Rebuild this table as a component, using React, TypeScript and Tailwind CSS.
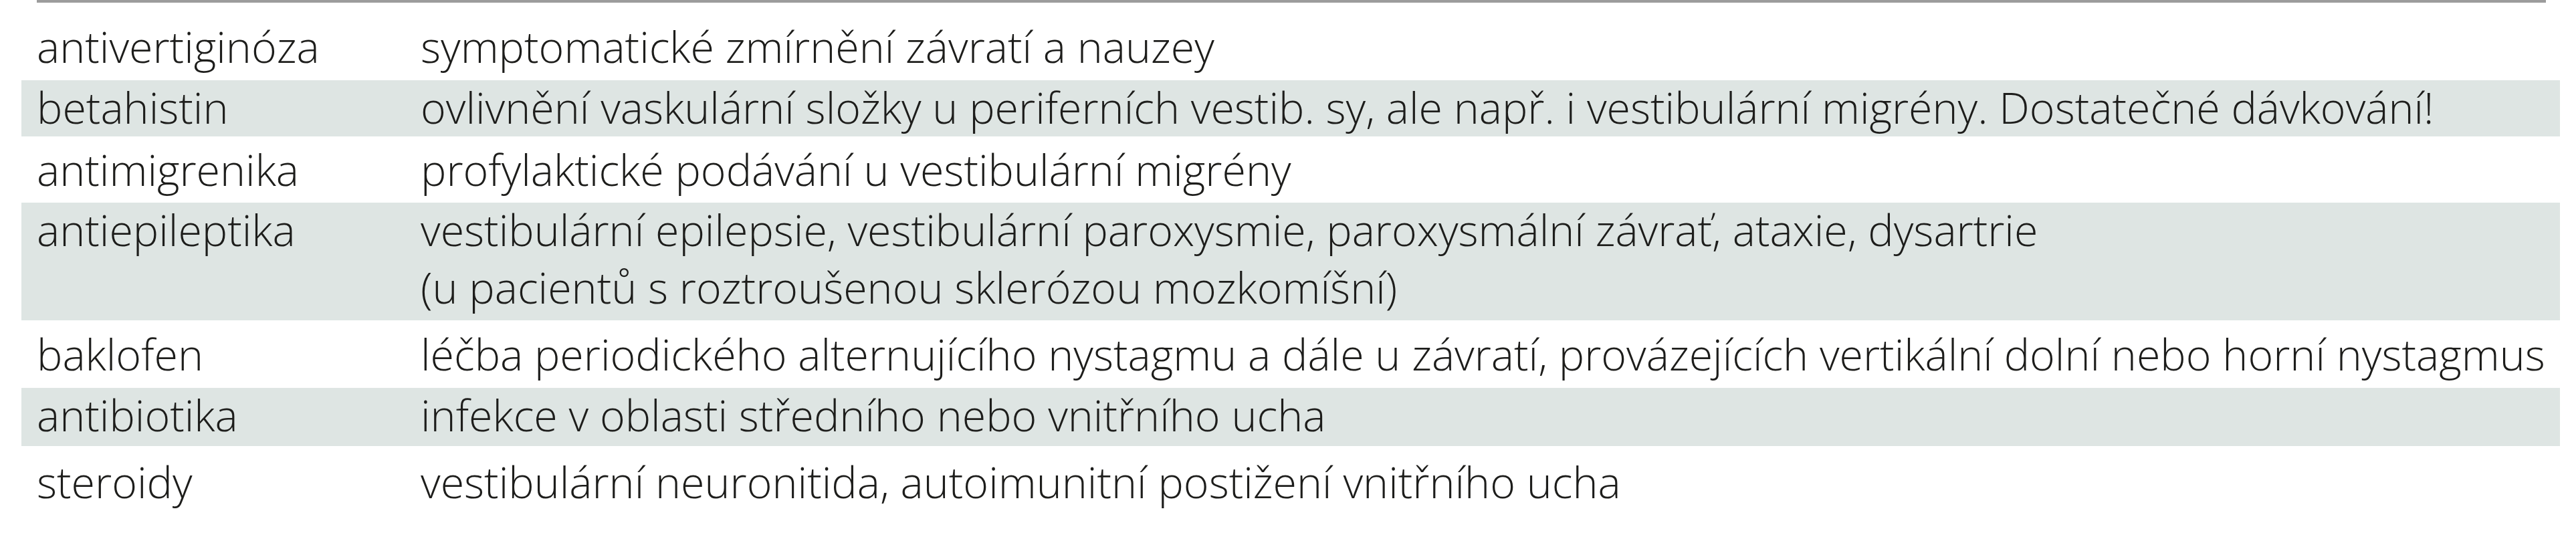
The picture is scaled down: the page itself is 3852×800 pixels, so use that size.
import React from "react";

// one row of the drug table: heights/paddings taken from the reference bands
type Row = {
  drug: string;
  lines: string[];
  rowClass: string;
};

const rows: Row[] = [
  {
    drug: "antivertiginóza",
    lines: ["symptomatické zmírnění závratí a nauzey"],
    rowClass: "h-[116px] pt-[25px] bg-white",
  },
  {
    drug: "betahistin",
    lines: [
      "ovlivnění vaskulární složky u periferních vestib. sy, ale např. i vestibulární migrény. Dostatečné dávkování!",
    ],
    rowClass: "h-[84px] pt-0 bg-[#dee5e3]",
  },
  {
    drug: "antimigrenika",
    lines: ["profylaktické podávání u vestibulární migrény"],
    rowClass: "h-[99px] pt-[9px] bg-white",
  },
  {
    drug: "antiepileptika",
    lines: [
      "vestibulární epilepsie, vestibulární paroxysmie, paroxysmální závrať, ataxie, dysartrie",
      "(u pacientů s roztroušenou sklerózou mozkomíšní)",
    ],
    rowClass: "h-[176px] pt-0 bg-[#dee5e3]",
  },
  {
    drug: "baklofen",
    lines: [
      "léčba periodického alternujícího nystagmu a dále u závratí, provázejících vertikální dolní nebo horní nystagmus",
    ],
    rowClass: "h-[101px] pt-[10px] bg-white",
  },
  {
    drug: "antibiotika",
    lines: ["infekce v oblasti středního nebo vnitřního ucha"],
    rowClass: "h-[87px] pt-0 bg-[#dee5e3]",
  },
  {
    drug: "steroidy",
    lines: ["vestibulární neuronitida, autoimunitní postižení vnitřního ucha"],
    rowClass: "h-[120px] pt-[13px] bg-white",
  },
];

function TableRow({ row }: { row: Row }) {
  return (
    <div className={"flex pl-[23px] " + row.rowClass}>
      <div className="w-[574px] shrink-0 leading-[80px]">{row.drug}</div>
      <div className="flex flex-col gap-[6px] leading-[80px] whitespace-nowrap">
        {row.lines.map((line, i) => (
          <div key={i}>{line}</div>
        ))}
      </div>
    </div>
  );
}

export default function App() {
  return (
    <div className="w-[3852px] h-[800px] overflow-hidden bg-white text-[#1d1d1b] font-['Open_Sans',sans-serif] font-light text-[64.5px]">
      {/* top rule */}
      <div className="ml-[55px] w-[3752px] h-[4px] bg-[#9c9c9c]" />

      {/* table body */}
      <div className="ml-[32px] w-[3796px] flex flex-col">
        {rows.map((row) => (
          <TableRow key={row.drug} row={row} />
        ))}
      </div>
    </div>
  );
}
